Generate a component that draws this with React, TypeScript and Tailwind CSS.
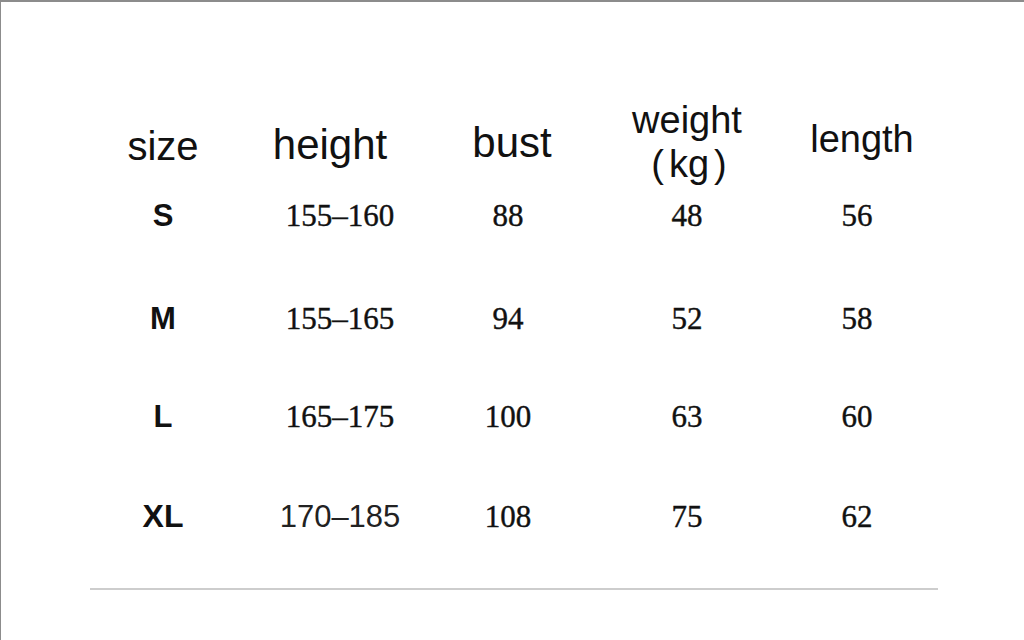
import React from 'react';

const sans = "font-['Liberation_Sans',Arial,sans-serif]";
const serif = "font-['Liberation_Serif','Times_New_Roman',serif] [-webkit-text-stroke:0.4px_#111]";

const cols = 'grid grid-cols-[170px_184px_156px_198px_142px]';

const rows = [
  { size: 'S', height: '155–160', bust: '88', weight: '48', length: '56', pad: '' },
  { size: 'M', height: '155–165', bust: '94', weight: '52', length: '58', pad: 'pt-[6px]' },
  { size: 'L', height: '165–175', bust: '100', weight: '63', length: '60', pad: 'pt-[2px]' },
  { size: 'XL', height: '170–185', bust: '108', weight: '75', length: '62', pad: 'pt-[2px]', sansHeight: true },
];

const App = () => {
  return (
    <div className="w-[1024px] h-[640px] bg-white border-t-2 border-l border-[#8c8c8c] overflow-hidden text-[#111]">
      <div className="pl-[77px] pt-[96px]">
        {/* header */}
        <div className={`${cols} h-[67px] ${sans} items-start text-center`}>
          <div className="mt-[28px] text-[40px] leading-none">size</div>
          <div className="mt-[26px] pr-[20px] text-[42px] leading-none">height</div>
          <div className="mt-[24px] pl-[4px] text-[42px] leading-none">bust</div>
          <div className="text-[38px] leading-[44px]">
            weight
            <br />
            <span className="pl-[4px]">
              <span className="mr-[5px]">(</span>kg<span className="ml-[5px]">)</span>
            </span>
          </div>
          <div className="mt-[22px] pl-[10px] text-[38px] leading-none">length</div>
        </div>

        {/* rows */}
        {rows.map((r) => (
          <div key={r.size} className={`${cols} h-[100px] items-center text-center ${r.pad}`}>
            <div className={`${sans} font-bold ${r.size === 'XL' ? 'text-[32px]' : 'text-[31px]'} leading-none`}>
              {r.size}
            </div>
            <div
              className={`${r.sansHeight ? `${sans} text-[31px] text-[#222]` : `${serif} text-[31px]`} leading-none`}
            >
              {r.height}
            </div>
            <div className={`${serif} text-[31px] leading-none pr-[4px]`}>{r.bust}</div>
            <div className={`${serif} text-[31px] leading-none`}>{r.weight}</div>
            <div className={`${serif} text-[31px] leading-none`}>{r.length}</div>
          </div>
        ))}
      </div>

      <div className="ml-[89px] mt-[23px] w-[848px] border-t-2 border-[#cdcdcd]" />
    </div>
  );
};

export default App;
